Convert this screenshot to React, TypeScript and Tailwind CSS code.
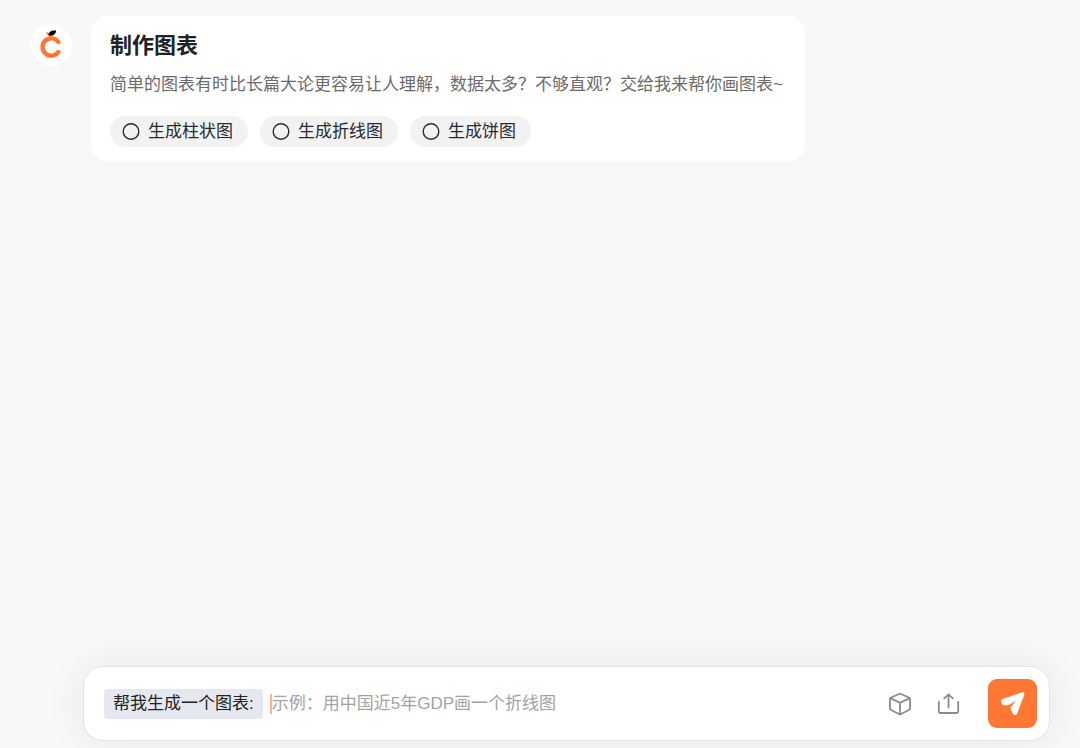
import { useState } from 'react'

const suggestions = ['生成柱状图', '生成折线图', '生成饼图']

function Logo() {
  return (
    <svg viewBox="0 0 42 42" className="h-[42px] w-[42px]" aria-hidden="true">
      <path
        d="M28.4 18A8.7 8.7 0 1 0 28.4 28"
        fill="none"
        stroke="#ff7733"
        strokeWidth="4.4"
        strokeLinecap="round"
      />
      <path d="M16.2 8.4c2.2-.6 4 .6 4.3 2.9-2.2.4-3.8-.7-4.3-2.9Z" fill="#ff7733" />
      <path d="M18.6 11.8c-.3-3.6 2.4-5.6 7.4-5.2.2 3.6-3 5.6-7.4 5.2Z" fill="#000000" />
    </svg>
  )
}

function CubeIcon() {
  return (
    <svg
      viewBox="0 0 24 24"
      className="h-6 w-6"
      fill="none"
      stroke="currentColor"
      strokeWidth="1.8"
      strokeLinejoin="round"
      strokeLinecap="round"
      aria-hidden="true"
    >
      <path d="M12.4 1.7 21.4 5.8q.6.3.6 1v10q0 .7-.6 1l-8.8 4.4q-.6.3-1.2 0l-8.8-4.4q-.6-.3-.6-1v-10q0-.7.6-1l9-4.1q.4-.2.8 0Z" />
      <path d="M2.4 6.4 12 10.6l9.6-4.2M12 10.6v11.6" />
    </svg>
  )
}

function UploadIcon() {
  return (
    <svg
      viewBox="0 0 24 24"
      className="h-6 w-6"
      fill="none"
      stroke="currentColor"
      strokeWidth="1.8"
      strokeLinejoin="round"
      strokeLinecap="round"
      aria-hidden="true"
    >
      <path d="M11.5 15.5V2.3M7.2 6.4l4.3-4.1 4.3 4.1" />
      <path d="M1.8 10v9.6q0 1.4 1.4 1.4h16.6q1.4 0 1.4-1.4V10" />
    </svg>
  )
}

function SendIcon() {
  return (
    <svg viewBox="0 0 24 24" className="h-6 w-6" fill="currentColor" aria-hidden="true">
      <path d="M20.6.4 1.6 7.1Q-.6 8 .2 10.1l.9 2q.9 1.8 2.9 1.4l4.3-.8 6.8-4.2-4.7 5.9-.5.8q-.5.8-.1 1.8l1.8 4.3q1 2.3 3 1.7 1.1-.4 1.6-1.8L23.1 3.2Q23.8.9 22.7.4q-.8-.4-2.1 0Z" />
    </svg>
  )
}

export default function App() {
  const [text, setText] = useState('')

  return (
    <div className="flex min-h-screen flex-col justify-between bg-[#f7f8fa] pt-4 pb-[7px] text-[17px] font-['Liberation_Sans','Noto_Sans_CJK_SC',sans-serif]">
      <main className="flex items-start gap-[19px] px-[30px]">
        <div className="mt-2 shrink-0 rounded-full bg-white">
          <Logo />
        </div>
        <section className="rounded-2xl bg-white py-[14px] pr-[22px] pl-[19px]">
          <h1 className="text-[22px] leading-8 font-bold text-[#222222]">制作图表</h1>
          <p className="mt-[10px] leading-[26px] text-[#6b6b6b]">
            简单的图表有时比长篇大论更容易让人理解，数据太多？不够直观？交给我来帮你画图表~
          </p>
          <div className="mt-[18px] flex flex-wrap gap-3">
            {suggestions.map((label) => (
              <button
                key={label}
                type="button"
                className="flex h-[31px] items-center gap-2 rounded-full bg-[#f2f2f2] pr-[15px] pl-3 text-[#272a33]"
              >
                <svg viewBox="0 0 18 18" className="h-[18px] w-[18px]" aria-hidden="true">
                  <circle cx="9" cy="8.5" r="7.8" fill="none" stroke="currentColor" strokeWidth="1.4" />
                </svg>
                {label}
              </button>
            ))}
          </div>
        </section>
      </main>

      <form
        onSubmit={(e) => e.preventDefault()}
        className="mr-[30px] ml-[83px] flex items-center rounded-[20px] border border-[#e2e3e8] bg-white py-3 pr-3 pl-5 shadow-[0_0_40px_rgba(0,0,0,0.07)]"
      >
        <label
          htmlFor="prompt"
          className="shrink-0 rounded bg-[#e5e8f0] px-[9px] leading-[30px] text-[#222222]"
        >
          帮我生成一个图表:
        </label>
        <span className="ml-[7px] h-5 w-0.5 shrink-0 bg-[#ffb391]" />
        <input
          id="prompt"
          type="text"
          value={text}
          onChange={(e) => setText(e.target.value)}
          placeholder="示例：用中国近5年GDP画一个折线图"
          className="min-w-0 flex-1 leading-[30px] caret-[#ff7733] outline-none placeholder:text-[#a3a3a3]"
        />
        <div className="flex shrink-0 items-center gap-[25px] text-[#8c8c8c]">
          <button type="button" aria-label="模型">
            <CubeIcon />
          </button>
          <button type="button" aria-label="上传">
            <UploadIcon />
          </button>
        </div>
        <button
          type="submit"
          aria-label="发送"
          className="ml-[27px] flex h-[49px] w-[49px] shrink-0 items-center justify-center rounded-[9px] bg-[#ff7733] text-white"
        >
          <SendIcon />
        </button>
      </form>
    </div>
  )
}
